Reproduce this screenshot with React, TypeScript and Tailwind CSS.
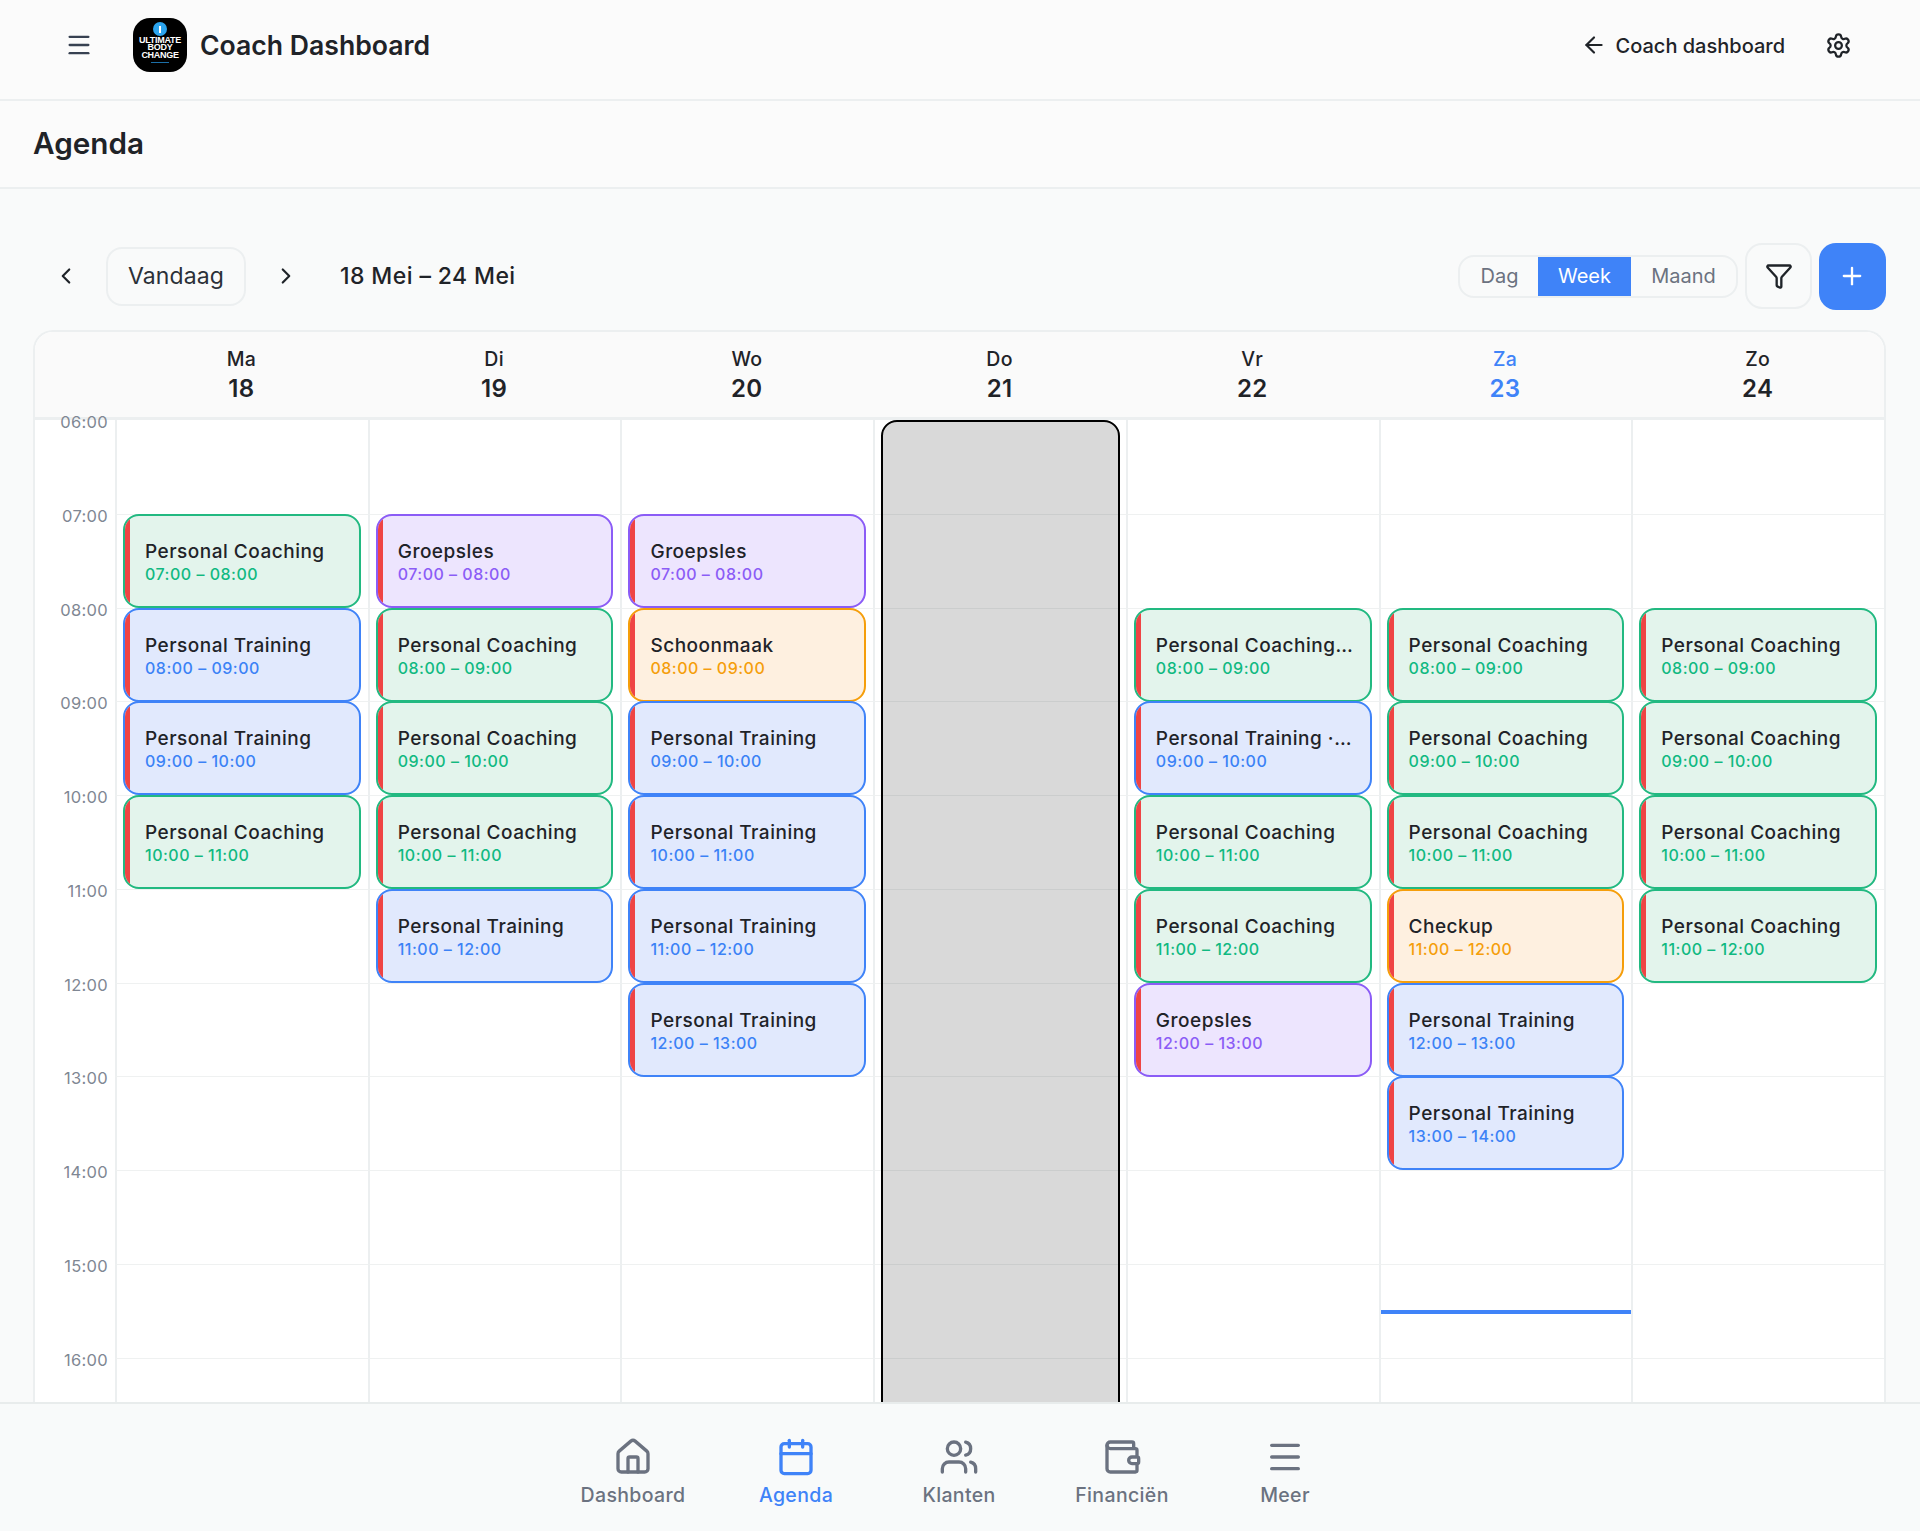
import { ArrowLeft, Calendar, ChevronLeft, ChevronRight, Filter, Home, Menu, Plus, Settings, Users, Wallet } from "lucide-react";

type Kind = "coaching" | "training" | "group" | "other";

interface AgendaEvent {
    title: string;
    kind: Kind;
}

const KIND_STYLES: Record<Kind, { box: string; time: string }> = {
    coaching: { box: "border-[#22b981] bg-[#e3f4ec]", time: "text-[#10b981]" },
    training: { box: "border-[#3f83f8] bg-[#e1e9fd]", time: "text-[#3b82f6]" },
    group: { box: "border-[#8b5cf6] bg-[#ede5fe]", time: "text-[#8b5cf6]" },
    other: { box: "border-[#f59e0b] bg-[#fef0e0]", time: "text-[#f59e0b]" },
};

const PC: AgendaEvent = { title: "Personal Coaching", kind: "coaching" };
const PT: AgendaEvent = { title: "Personal Training", kind: "training" };
const GR: AgendaEvent = { title: "Groepsles", kind: "group" };

const DAYS = [
    { short: "Ma", date: 18, events: { 7: PC, 8: PT, 9: PT, 10: PC } },
    { short: "Di", date: 19, events: { 7: GR, 8: PC, 9: PC, 10: PC, 11: PT } },
    { short: "Wo", date: 20, events: { 7: GR, 8: { title: "Schoonmaak", kind: "other" }, 9: PT, 10: PT, 11: PT, 12: PT } },
    { short: "Do", date: 21, events: {} },
    {
        short: "Vr",
        date: 22,
        events: {
            8: { title: "Personal Coaching · Lisa", kind: "coaching" },
            9: { title: "Personal Training · Mark", kind: "training" },
            10: PC,
            11: PC,
            12: GR,
        },
    },
    { short: "Za", date: 23, today: true, events: { 8: PC, 9: PC, 10: PC, 11: { title: "Checkup", kind: "other" }, 12: PT, 13: PT } },
    { short: "Zo", date: 24, events: { 8: PC, 9: PC, 10: PC, 11: PC } },
] as { short: string; date: number; today?: boolean; events: Record<number, AgendaEvent> }[];

const HOURS = [6, 7, 8, 9, 10, 11, 12, 13, 14, 15, 16];

const pad = (h: number) => `${h < 10 ? "0" : ""}${h}:00`;

const NAV_ITEMS = [
    { label: "Dashboard", icon: Home },
    { label: "Agenda", icon: Calendar, active: true },
    { label: "Klanten", icon: Users },
    { label: "Financiën", icon: Wallet },
    { label: "Meer", icon: Menu },
];

const EventCard = ({ event, hour }: { event: AgendaEvent; hour: number }) => {
    const styles = KIND_STYLES[event.kind];
    return (
        <div className={`relative z-[1] -mt-px h-[94px] rounded-[16px] border-2 overflow-hidden ${styles.box}`}>
            <div className="h-full border-l-[5px] border-[#ef4444] pl-[15px] pr-[16px] pt-[1px] flex flex-col justify-center">
                <div className="truncate text-[19px] leading-[25px] font-medium tracking-[0.5px] text-[#1f2328]">{event.title}</div>
                <div className={`text-[16px] leading-[20px] font-medium tracking-[0.5px] ${styles.time}`}>
                    {pad(hour)} – {pad(hour + 1)}
                </div>
            </div>
        </div>
    );
};

const Logo = () => (
    <div className="w-[54px] h-[54px] rounded-[17px] bg-black flex flex-col items-center pt-[4px] shrink-0 font-['Liberation_Sans',sans-serif] font-bold text-white text-[9px] leading-[7.4px]">
        <div className="w-[14px] h-[14px] rounded-full bg-[#2ba4ee] mb-[1px] flex items-center justify-center">
            <div className="w-[2px] h-[7px] bg-white" />
        </div>
        <div className="tracking-[-0.3px]">ULTIMATE</div>
        <div className="tracking-[-0.3px]">BODY</div>
        <div className="tracking-[-0.3px]">CHANGE</div>
        <div className="w-[18px] h-px bg-[#1c6fa8] mt-[3px]" />
    </div>
);

export default function App() {
    return (
        <div className="h-[1531px] flex flex-col overflow-hidden bg-[#f9fafa] font-['Inter',sans-serif] text-[#1f2328]">
            {/* Top bar */}
            <header className="h-[101px] shrink-0 border-b-2 border-[#eceff0] flex items-center justify-between pl-[65px] pr-[67px] pb-[9px] bg-[#fbfbfb]">
                <div className="flex items-center">
                    <Menu size={28} strokeWidth={2} className="text-[#374151]" />
                    <div className="ml-[40px]">
                        <Logo />
                    </div>
                    <h1 className="ml-[13px] text-[26.6px] font-semibold leading-none">Coach Dashboard</h1>
                </div>
                <div className="flex items-center">
                    <ArrowLeft size={26} strokeWidth={2} />
                    <span className="ml-[9px] mt-[2px] text-[20px] font-medium">Coach dashboard</span>
                    <Settings size={27} strokeWidth={2} className="ml-[40px] mr-[1px]" />
                </div>
            </header>

            {/* Page title */}
            <div className="h-[88px] shrink-0 border-b-2 border-[#eceff0] flex items-center pl-[33px] bg-[#fbfbfb]">
                <h2 className="text-[29.7px] font-semibold leading-none">Agenda</h2>
            </div>

            <main className="flex-1 min-h-0 flex flex-col pl-[33px] pr-[34px] pt-[54px]">
                {/* Toolbar */}
                <div className="h-[66px] shrink-0 flex items-center justify-between mb-[21px]">
                    <div className="flex items-center">
                        <ChevronLeft size={26} strokeWidth={2} className="ml-[20px]" />
                        <button className="ml-[27px] w-[140px] h-[59px] rounded-[16px] border-2 border-[#eceff0] text-[23px] tracking-[0.1px] text-[#2b3038]">Vandaag</button>
                        <ChevronRight size={26} strokeWidth={2} className="ml-[27px]" />
                        <span className="ml-[41px] text-[23px] font-medium tracking-[0.4px]">18 Mei – 24 Mei</span>
                    </div>
                    <div className="flex items-center">
                        <div className="h-[43px] w-[280px] rounded-[16px] border-2 border-[#eceff0] flex items-center text-[20px] text-[#6b7280] overflow-hidden pl-[1px]">
                            <span className="w-[77px] text-center">Dag</span>
                            <span className="w-[93px] h-[40px] bg-[#3f83f8] text-white flex items-center justify-center">Week</span>
                            <span className="flex-1 text-center">Maand</span>
                        </div>
                        <button className="ml-[7px] w-[67px] h-[66px] rounded-[17px] border-2 border-[#eceff0] flex items-center justify-center">
                            <Filter size={28} strokeWidth={2} />
                        </button>
                        <button className="ml-[7px] w-[67px] h-[67px] rounded-[17px] bg-[#3f83f8] text-white flex items-center justify-center pr-[2px]">
                            <Plus size={28} strokeWidth={2} />
                        </button>
                    </div>
                </div>

                {/* Calendar */}
                <div className="flex-1 min-h-0 flex flex-col rounded-t-[20px] border-x-2 border-t-2 border-[#eceff0] overflow-hidden bg-white">
                    <div className="h-[88px] shrink-0 border-b-[3px] border-[#eceff0] bg-[#fafafa] grid grid-cols-[80px_repeat(7,minmax(0,1fr))]">
                        <div />
                        {DAYS.map(day => (
                            <div key={day.short} className={`flex flex-col items-center pt-[14px] ${day.today ? "text-[#3f83f8]" : ""}`}>
                                <span className="text-[19.5px] leading-[26px] font-medium tracking-[0.2px]">{day.short}</span>
                                <span className="mt-[1px] text-[24px] leading-[32px] font-semibold tracking-[0.3px]">{day.date}</span>
                            </div>
                        ))}
                    </div>

                    <div className="relative flex-1 min-h-0">
                        {HOURS.map(hour => (
                            <div key={hour} className="h-[93.75px] grid grid-cols-[80px_repeat(7,minmax(0,1fr))]">
                                <div className="flex justify-end pr-[7px]">
                                    <span className="relative z-[2] -mt-[10px] h-[24px] text-[16.5px] leading-[24px] tracking-[0.3px] text-[#7f8793]">{pad(hour)}</span>
                                </div>
                                {DAYS.map(day => (
                                    <div key={day.short} className={`border-l-2 border-[#eceff0] pl-[6px] pr-[7px] ${hour === 6 ? "" : "border-t border-t-[#eff1f1]"}`}>
                                        {day.events[hour] && <EventCard event={day.events[hour]} hour={hour} />}
                                    </div>
                                ))}
                            </div>
                        ))}

                        {/* Overlays: blocked day and current time */}
                        <div className="absolute inset-0 grid grid-cols-[80px_repeat(7,minmax(0,1fr))] pointer-events-none">
                            <div className="col-start-5 ml-[8px] mr-[6px] h-[1100px] rounded-[16px] border-2 border-black bg-black/15 z-[3]" />
                            <div className="col-start-7 row-start-1 mt-[890px] ml-[2px] h-[4px] bg-[#3f83f8] z-[3]" />
                        </div>
                    </div>
                </div>
            </main>

            {/* Bottom nav */}
            <nav className="relative z-10 h-[129px] shrink-0 border-t-2 border-[#e8ecec] bg-[#f8fafa] flex justify-center pt-[33px] pr-[2px]">
                {NAV_ITEMS.map(({ label, icon: Icon, active }) => (
                    <div key={label} className={`w-[163px] flex flex-col items-center ${active ? "text-[#3f83f8]" : "text-[#6b7280]"}`}>
                        <Icon size={40} strokeWidth={2} />
                        <span className="mt-[6px] text-[19.5px] leading-[24px] font-medium tracking-[0.35px]">{label}</span>
                    </div>
                ))}
            </nav>
        </div>
    );
}
